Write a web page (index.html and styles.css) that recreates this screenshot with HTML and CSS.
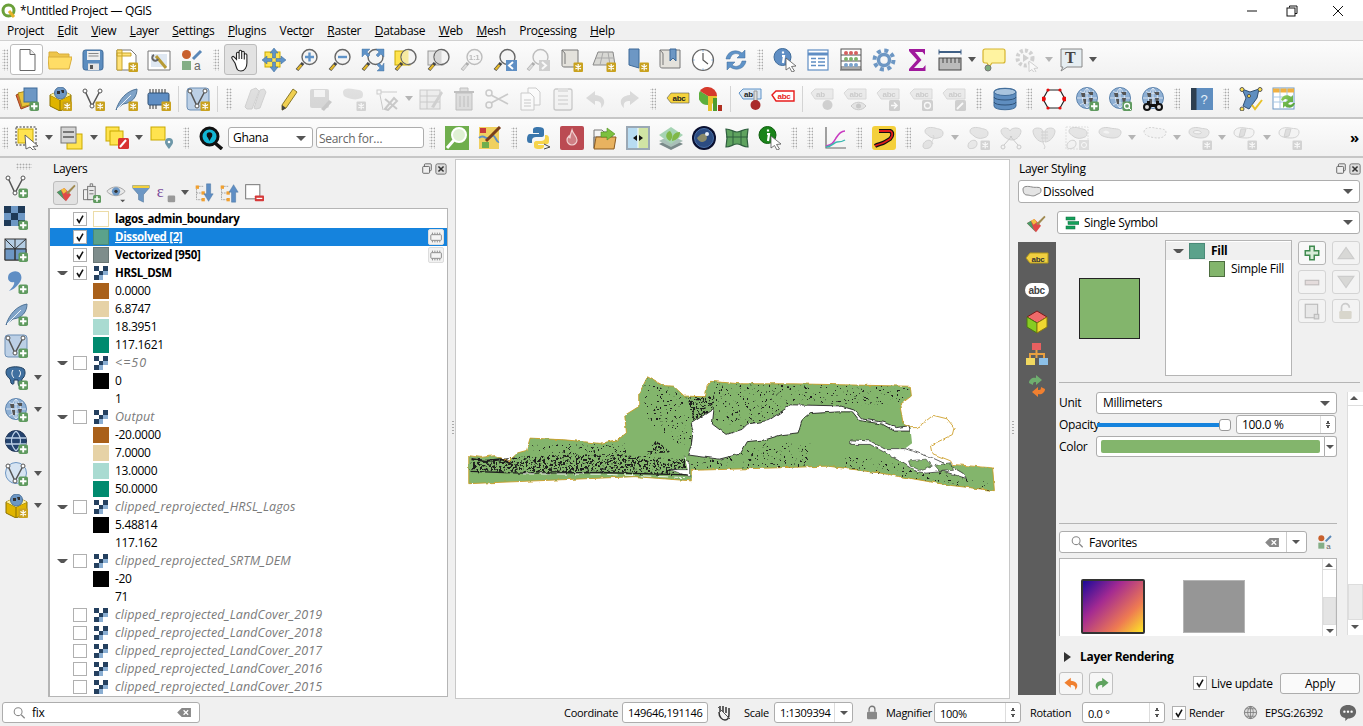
FILE: index.html
```html
<!DOCTYPE html>
<html lang="en">
<head>
<meta charset="utf-8">
<title>*Untitled Project — QGIS</title>
<link rel="stylesheet" href="styles.css">
</head>
<body>
<svg class="defs" xmlns="http://www.w3.org/2000/svg">
<defs>
<g id="bp"><rect x="14.5" y="14.5" width="9.5" height="9.5" rx="1.8" fill="#5f9a5f"/><path d="M19.2 16v6.5M16 19.2h6.5" stroke="#fff" stroke-width="1.9"/></g>
<g id="bs"><rect x="14.5" y="14.5" width="9.5" height="9.5" rx="1" fill="#c9a21f"/><path d="M19.2 16v6.5M16.4 17.5l5.6 3.4M22 17.5l-5.6 3.4" stroke="#fff" stroke-width="1.2"/></g>
<g id="mg"><path d="M8 15L2 22" stroke="#444" stroke-width="3.4"/><path d="M6.5 17L2.5 21.5" stroke="#e3b82c" stroke-width="2.2"/><circle cx="14.5" cy="9" r="7.5" fill="#f4f4f4" stroke="#666" stroke-width="1.4"/></g>
<g id="vv"><path d="M4 4L11 19L19 4" fill="none" stroke="#555" stroke-width="1.5"/><circle cx="4" cy="4" r="2" fill="#fff" stroke="#555"/><circle cx="11" cy="19" r="2" fill="#fff" stroke="#555"/><circle cx="19" cy="4" r="2" fill="#fff" stroke="#555"/></g>
<g id="fe"><path d="M2 23C5 13 12 4 23 2C23 10 18 16 9 17L5 20Z" fill="#7fa3c8" stroke="#4f7396"/><path d="M3 22L17 8" stroke="#e8f0f8"/></g>
<g id="gl"><circle cx="12" cy="11" r="10.5" fill="#8fb0d4" stroke="#5d84ae"/><path d="M2 11h20M12 1v20M5 4c4 3 10 3 14 0M5 18c4-3 10-3 14 0M12 1c-6 6-6 14 0 20M12 1c6 6 6 14 0 20" fill="none" stroke="#dfe8f2" stroke-width=".9"/><path d="M6 6h4v4H7zM13 5h5v3h-3zM8 12h3v5H9zM14 11h4l-1 5h-2z" fill="#555"/></g>
<g id="bx"><path d="M2 8L13 3L23 8V19L12 24L2 19Z" fill="#e0b400" stroke="#8a7000"/><path d="M2 8L12 13V24M12 13L23 8" fill="none" stroke="#8a7000"/><path d="M2 8L12 13L23 8L13 3Z" fill="#fff2a0"/><circle cx="12.5" cy="6" r="6" fill="#6d97c4" stroke="#4c7199"/><path d="M9 4h3v3H9zM13 3h3v3h-2z" fill="#333"/></g>
<g id="bl"><path d="M4 5c0-4 7-4 10-3s8 1 8 5-2 4-5 5-7 0-9-2S4 8 4 5z" fill="#c9c9c6" stroke="#999"/></g>
<linearGradient id="grad" x1="0" y1="0" x2="1" y2="1"><stop offset="0" stop-color="#8fd05e"/><stop offset="1" stop-color="#4f9d3a"/></linearGradient>
</defs>
<symbol id="qg" viewBox="0 0 16 16"><circle cx="7.5" cy="7.5" r="5.5" fill="none" stroke="#6aa03a" stroke-width="3"/><path d="M8 8l5 6" stroke="#e4b32a" stroke-width="3"/></symbol>
<symbol id="new" viewBox="0 0 24 24"><path d="M5 1.5h10l5 5v16H5z" fill="#fff" stroke="#666"/><path d="M15 1.5v5h5" fill="#eee" stroke="#666"/></symbol>
<symbol id="open" viewBox="0 0 24 24"><path d="M1 6V4h8l2 2h10v5H1z" fill="#eec54a" stroke="#d8ad3c"/><path d="M1 21L0 9h24l-3 12z" fill="#ffdd66" stroke="#d8ad3c"/></symbol>
<symbol id="save" viewBox="0 0 24 24"><rect x="2" y="2" width="20" height="20" rx="2.5" fill="#5c8dbf" stroke="#3f6b99"/><rect x="6" y="3" width="13" height="9" fill="#eee"/><path d="M7.5 5.5h10M7.5 8h10" stroke="#888"/><rect x="7" y="15.5" width="11" height="6.5" fill="#e4e4e4"/><rect x="9" y="17" width="3" height="4" fill="#555"/></symbol>
<symbol id="nlay" viewBox="0 0 24 24"><path d="M3 2h14l5 5v15H3z" fill="#fff" stroke="#777"/><path d="M3 2h5v20H3zM3 5h14v3H3z" fill="#ffe27a" stroke="#c9a52a"/><use href="#bs"/></symbol>
<symbol id="lman" viewBox="0 0 24 24"><path d="M1 3h22v19H1z" fill="#fff" stroke="#777"/><path d="M4 6h16v13H4z" fill="#dfe8f2"/><path d="M9 8l10 12" stroke="#b89b35" stroke-width="3"/><path d="M7 7a3 3 0 1 0 4 4" fill="none" stroke="#666" stroke-width="2"/></symbol>
<symbol id="stl" viewBox="0 0 24 24"><circle cx="6.5" cy="6.5" r="4.5" fill="#c8602d"/><path d="M13 11L21 3" stroke="#5a88b8" stroke-width="3"/><rect x="2" y="13" width="9" height="9" fill="#84ae86"/></symbol>
<symbol id="hand" viewBox="0 0 24 24"><path d="M6 15L3 10.5c-1-1.5 1-2.800 2-1.500L7.500 11.500V5.500a1.300 1.300 0 0 1 2.600 0V11V3.500a1.300 1.300 0 0 1 2.600 0V11V4.500a1.300 1.300 0 0 1 2.600 0V11.500V7a1.300 1.300 0 0 1 2.600 0V15c0 4-2 8-6 8S8 21 6 15z" fill="#fff" stroke="#222" stroke-width="1.1"/></symbol>
<symbol id="pans" viewBox="0 0 24 24"><rect x="3" y="4" width="15" height="15" fill="#ffe34f" stroke="#c9a900"/><path d="M12 0l4 5h-2.500v5h-3V5H8zM12 24l-4-5h2.500v-5h3v5H16zM0 12l5-4v2.500h5v3H5V16zM24 12l-5 4v-2.500h-5v-3h5V8z" fill="#5f93c8" stroke="#3f6b99" stroke-width=".5"/></symbol>
<symbol id="zin" viewBox="0 0 24 24"><use href="#mg"/><path d="M14.500 4.500v9M10 9h9" stroke="#5f93c8" stroke-width="2.4"/></symbol>
<symbol id="zout" viewBox="0 0 24 24"><use href="#mg"/><path d="M10 9h9" stroke="#5f93c8" stroke-width="2.4"/></symbol>
<symbol id="zful" viewBox="0 0 24 24"><use href="#mg"/><path d="M1 1h8l-3 3 3 3-2 2-3-3-3 3zM23 1v8l-3-3-3 3-2-2 3-3-3-3zM23 23h-7l3-3-3-3 2-2 3 3 2-3z" fill="#5f93c8" stroke="#3f6b99" stroke-width=".4"/></symbol>
<symbol id="zsel" viewBox="0 0 24 24"><rect x="1" y="3" width="15" height="14" fill="#ffe34f" stroke="#c9a900"/><use href="#mg"/><path d="M14.500 2a7 7 0 0 0 0 14z" fill="#f6e9a0"/></symbol>
<symbol id="zlay" viewBox="0 0 24 24"><rect x="1" y="3" width="15" height="14" fill="#e6e6e6" stroke="#999"/><use href="#mg"/><path d="M14.500 2a7 7 0 0 0 0 14z" fill="#d6d6d6"/></symbol>
<symbol id="z11" viewBox="0 0 24 24"><use href="#mg"/></symbol>
<symbol id="zprv" viewBox="0 0 24 24"><use href="#mg"/><rect x="13" y="12" width="11" height="11" fill="#5f8fc4"/><path d="M20 14l-4 3.500 4 3.500" fill="none" stroke="#fff" stroke-width="2"/></symbol>
<symbol id="znxt" viewBox="0 0 24 24"><use href="#mg"/><rect x="13" y="12" width="11" height="11" fill="#999"/><path d="M16 14l4 3.500-4 3.500" fill="none" stroke="#fff" stroke-width="2"/></symbol>
<symbol id="nmap" viewBox="0 0 24 24"><path d="M3 2h16v17H6c-3 0-3-1-3-3z" fill="#e4e2dc" stroke="#777"/><path d="M3 2c1 2 3 2 3 4v10" fill="none" stroke="#777"/><use href="#bs"/></symbol>
<symbol id="m3d" viewBox="0 0 24 24"><path d="M6 4h15l2 13H1z" fill="#d8d8d4" stroke="#888"/><path d="M11 4l-3 13M16 4l2 13M4 10h18" stroke="#aaa"/><use href="#bs"/></symbol>
<symbol id="bmk" viewBox="0 0 24 24"><path d="M4 1h10v19l-10-3z" fill="#6d97c4" stroke="#3f6b99"/><use href="#bs"/></symbol>
<symbol id="bm2" viewBox="0 0 24 24"><path d="M2 2h20v18H5c-3 0-3-1-3-3z" fill="#e4e2dc" stroke="#777"/><path d="M2 2c1 2 3 2 3 4v11" fill="none" stroke="#777"/><path d="M12 1h6v12l-3-3-3 3z" fill="#6d97c4" stroke="#3f6b99"/></symbol>
<symbol id="clk" viewBox="0 0 24 24"><circle cx="12" cy="12" r="10.5" fill="#fff" stroke="#666" stroke-width="1.2"/><path d="M12 5v7l5 4" fill="none" stroke="#555" stroke-width="1.2"/><path d="M12 2v1.500M12 20.500V22M2 12h1.500M20.500 12H22" stroke="#6d97c4"/></symbol>
<symbol id="rfr" viewBox="0 0 24 24"><path d="M2 11C3 4 11 0 18 5l3-3v8h-8l3-3C12 4 7 6 6 11z" fill="#5f93c8" stroke="#3f6b99" stroke-width=".5"/><path d="M22 13c-1 7-9 11-16 6l-3 3v-8h8l-3 3c4 3 9 1 10-4z" fill="#5f93c8" stroke="#3f6b99" stroke-width=".5"/></symbol>
<symbol id="idn" viewBox="0 0 24 24"><circle cx="9.5" cy="9" r="8.5" fill="#5f8ec4" stroke="#3f6b99"/><path d="M10 3.500v2M9 8h2l-1 7" stroke="#fff" stroke-width="2.2" fill="none"/><path d="M13 10l10 8-4.500.5 3 4.500-2.500 1-2.500-4.500L13 22z" fill="#fff" stroke="#555" stroke-width=".8"/></symbol>
<symbol id="tbl" viewBox="0 0 24 24"><rect x="2" y="2" width="20" height="20" fill="#fff" stroke="#5f8ec4" stroke-width="1.2"/><path d="M2 6h20" stroke="#5f8ec4" stroke-width="3"/><path d="M5 10.500h5M5 14h5M5 17.500h5M12 10.500h7M12 14h7M12 17.500h7" stroke="#5f8ec4" stroke-width="1.3"/></symbol>
<symbol id="abc2" viewBox="0 0 24 24"><rect x="2" y="1" width="20" height="20" fill="#fff" stroke="#555"/><path d="M1 22h22M2 7h20M2 13h20M2 19h20" stroke="#555"/><circle cx="7" cy="5" r="2" fill="#d46060"/><circle cx="12" cy="5" r="2" fill="#d46060"/><circle cx="17" cy="5" r="2" fill="#d46060"/><circle cx="7" cy="11" r="2" fill="#7cb36c"/><circle cx="12" cy="11" r="2" fill="#7cb36c"/><circle cx="17" cy="11" r="2" fill="#7cb36c"/><circle cx="7" cy="17" r="2" fill="#7ba2cc"/><circle cx="12" cy="17" r="2" fill="#7ba2cc"/><circle cx="17" cy="17" r="2" fill="#7ba2cc"/></symbol>
<symbol id="gear" viewBox="0 0 24 24"><circle cx="12" cy="12" r="9.500" fill="none" stroke="#6d97c4" stroke-width="4" stroke-dasharray="4 3.460"/><circle cx="12" cy="12" r="5.500" fill="none" stroke="#6d97c4" stroke-width="3.5"/></symbol>
<symbol id="sig" viewBox="0 0 24 24"><path d="M4 1h16v6l-2.500-3H10l6.500 8L9 20h9l2.500-3v6H4v-2l8-9-8-9z" fill="#a0189c"/></symbol>
<symbol id="rul" viewBox="0 0 24 24"><path d="M1 4h22" stroke="#3f5f85" stroke-width="2"/><path d="M1 1.500v5M23 1.500v5" stroke="#3f5f85"/><rect x="1" y="10" width="22" height="12" fill="#bbb" stroke="#444"/><path d="M5 10v5M9 10v5M13 10v5M17 10v5M21 10v5" stroke="#444"/></symbol>
<symbol id="nte" viewBox="0 0 24 24"><path d="M3 1h18a2 2 0 0 1 2 2v10a2 2 0 0 1-2 2H10l-3 4-2-4H3a2 2 0 0 1-2-2V3a2 2 0 0 1 2-2z" fill="#fff3a0" stroke="#d6b52e" stroke-width="1.2"/><circle cx="6" cy="20" r="3" fill="#7cab7c" stroke="#777"/></symbol>
<symbol id="gpl" viewBox="0 0 24 24"><circle cx="10" cy="10" r="7.500" fill="none" stroke="#999" stroke-width="4" stroke-dasharray="3 2"/><path d="M8 6l6 4-6 4z" fill="#999"/><path d="M14 13l9 7-4 .5 2 3-2 1-2-3-3 2z" fill="#fff" stroke="#999"/></symbol>
<symbol id="tcl" viewBox="0 0 24 24"><path d="M2 1h21v18H8l-6 4 2-4H2z" fill="#e6eef2" stroke="#888"/></symbol>
<symbol id="adl" viewBox="0 0 24 24"><path d="M1 8l12-4 3 14-10 4z" fill="#d96b3a" stroke="#a0441c"/><path d="M3 6l13-3 2 14-11 3z" fill="#e9c23a" stroke="#a88a1a"/><rect x="9" y="1" width="13" height="14" fill="#6d97c4" stroke="#3f6b99"/><use href="#bp"/></symbol>
<symbol id="ngp" viewBox="0 0 24 24"><use href="#bx"/><use href="#bs"/></symbol>
<symbol id="vst" viewBox="0 0 24 24"><use href="#vv"/><use href="#bs"/></symbol>
<symbol id="fst" viewBox="0 0 24 24"><use href="#fe"/><use href="#bs"/></symbol>
<symbol id="chp" viewBox="0 0 24 24"><path d="M3 2v4M6 2v4M9 2v4M12 2v4M15 2v4M18 2v4M3 18v4M6 18v4M9 18v4" stroke="#333"/><rect x="1" y="6" width="21" height="12" rx="1.5" fill="#5f8ec4" stroke="#2f4f73"/><use href="#bs"/></symbol>
<symbol id="vbs" viewBox="0 0 24 24"><rect x="1" y="1" width="22" height="22" rx="3" fill="#bcd0e6" stroke="#6d8fb5"/><use href="#vv"/><use href="#bs"/></symbol>
<symbol id="pns" viewBox="0 0 24 24"><path d="M4 22L2 20 8 3l5-2 3 3-7 18zM13 22l-2-1L17 3l4-1 2 3-6 16z" fill="#bbb" stroke="#999"/></symbol>
<symbol id="pen" viewBox="0 0 24 24"><path d="M6 18L17 2l4 3L10 21l-4 2z" fill="#f0cf50" stroke="#8a7a2a"/><path d="M6 18l4 3-4 2.500z" fill="#444"/></symbol>
<symbol id="sed" viewBox="0 0 24 24"><rect x="1" y="2" width="19" height="19" rx="2" fill="#aaa"/><rect x="5" y="3" width="11" height="7" fill="#eee"/><path d="M12 22l8-9 3 2-8 9z" fill="#888"/></symbol>
<symbol id="apl" viewBox="0 0 24 24"><path d="M1 5c0-4 7-4 10-3s10 0 10 5-2 4-5 5-7 0-10-1S1 9 1 5z" fill="#bbb"/><use href="#bs"/></symbol>
<symbol id="vtx" viewBox="0 0 24 24"><rect x="2" y="3" width="4" height="4" fill="none" stroke="#888"/><path d="M6 5h16M5 8l3 15" stroke="#888"/><path d="M10 22l9-11 3 3-9 9zM10 12l12 10" stroke="#888" stroke-width="2" fill="none"/></symbol>
<symbol id="ted" viewBox="0 0 24 24"><rect x="1" y="3" width="20" height="19" fill="#ddd" stroke="#888"/><path d="M1 9h20M1 15h20M8 3v19" stroke="#888"/><path d="M12 20L22 4l2 2-9 15z" fill="#999"/></symbol>
<symbol id="trs" viewBox="0 0 24 24"><path d="M2 5h20" stroke="#866" stroke-width="2"/><path d="M8 4V1h8v3M4 6h16v17H4z" fill="#c9b5b5" stroke="#866"/><path d="M8 9v11M12 9v11M16 9v11" stroke="#866"/></symbol>
<symbol id="scs" viewBox="0 0 24 24"><circle cx="4" cy="6" r="3" fill="none" stroke="#888" stroke-width="1.5"/><circle cx="4" cy="18" r="3" fill="none" stroke="#888" stroke-width="1.5"/><path d="M6 8l17 9M6 16l17-9" stroke="#888" stroke-width="1.7"/></symbol>
<symbol id="cpy" viewBox="0 0 24 24"><path d="M10 1h8l4 4v13H10z" fill="#fff" stroke="#888"/><path d="M3 6h9l4 4v13H3z" fill="#fff" stroke="#888"/><path d="M6 13h7M6 16h7M6 19h7" stroke="#888"/></symbol>
<symbol id="pst" viewBox="0 0 24 24"><rect x="3" y="2" width="18" height="21" rx="2" fill="#eee" stroke="#888" stroke-width="1.3"/><rect x="7" y="1" width="10" height="4" fill="#bbb"/><path d="M7 9h10M7 13h10M7 17h10" stroke="#888"/></symbol>
<symbol id="und" viewBox="0 0 24 24"><path d="M11 4L2 11l9 7v-4c5 0 7 2 6 7 5-4 5-12-6-13z" fill="#f08030"/></symbol>
<symbol id="red" viewBox="0 0 24 24"><path d="M13 4l9 7-9 7v-4c-5 0-7 2-6 7-5-4-5-12 6-13z" fill="#5fa35f"/></symbol>
<symbol id="yl" viewBox="0 0 24 24"><path d="M1 11l4-5h18v10H5z" fill="#f5d33c" stroke="#555" stroke-width=".6"/></symbol>
<symbol id="pie" viewBox="0 0 24 24"><path d="M9 9V0a9 9 0 0 1 9 9z" fill="#d63a2c"/><path d="M9 9h9a9 9 0 0 1-9 9z" fill="#e8c32c"/><path d="M9 9v9A9 9 0 0 1 1 4z" fill="#5cae3c"/><path d="M9 9L1 4a9 9 0 0 1 8-4z" fill="#d63a2c"/><rect x="9" y="17" width="4" height="7" fill="#e8c32c"/><rect x="14" y="11" width="4" height="13" fill="#4e9c2e"/><rect x="19" y="18" width="4" height="6" fill="#b03020"/></symbol>
<symbol id="apn" viewBox="0 0 24 24"><path d="M1 6l4-4h18v10H5z" fill="#d9e6f3" stroke="#5f93c8"/><path d="M16 4h3v10h-3z" fill="#ddd" stroke="#999"/><circle cx="17.5" cy="18" r="5" fill="#aa2a2a"/></symbol>
<symbol id="ard" viewBox="0 0 24 24"><path d="M1 8l4-4h18v10H5z" fill="#fff" stroke="#e81c1c" stroke-width="1.4"/></symbol>
<symbol id="a1" viewBox="0 0 24 24"><path d="M1 6l4-4h18v10H5z" fill="#d6d6d6" stroke="#aaa"/><circle cx="17.5" cy="18" r="5" fill="#999"/></symbol>
<symbol id="a2" viewBox="0 0 24 24"><path d="M1 6l4-4h18v10H5z" fill="#d6d6d6" stroke="#aaa"/><path d="M8 19c4-5 11-5 15 0-4 5-11 5-15 0z" fill="#ccc" stroke="#888"/><circle cx="15.5" cy="19" r="2.5" fill="#888"/></symbol>
<symbol id="a3" viewBox="0 0 24 24"><path d="M1 6l4-4h18v10H5z" fill="#d6d6d6" stroke="#aaa"/><rect x="13" y="13" width="11" height="11" rx="1.5" fill="#999"/><path d="M15 18.500h5M18 15.500l3 3-3 3" stroke="#fff" stroke-width="1.5" fill="none"/></symbol>
<symbol id="a4" viewBox="0 0 24 24"><path d="M1 6l4-4h18v10H5z" fill="#d6d6d6" stroke="#aaa"/><rect x="13" y="13" width="11" height="11" rx="1.5" fill="#999"/><circle cx="18.5" cy="18.5" r="3" fill="none" stroke="#fff" stroke-width="1.3"/></symbol>
<symbol id="a5" viewBox="0 0 24 24"><path d="M1 6l4-4h18v10H5z" fill="#d6d6d6" stroke="#aaa"/><rect x="13" y="13" width="11" height="11" rx="1.5" fill="#999"/><path d="M15 22l6-6" stroke="#fff" stroke-width="1.8"/></symbol>
<symbol id="db" viewBox="0 0 24 24"><path d="M1 5c0-5 22-5 22 0v14c0 5-22 5-22 0z" fill="#5f8ec0" stroke="#3f6b99"/><ellipse cx="12" cy="5" rx="11" ry="3.5" fill="#a9c4de" stroke="#3f6b99"/><path d="M1 10c0 4 22 4 22 0M1 15c0 4 22 4 22 0" fill="none" stroke="#2f5278"/></symbol>
<symbol id="hex" viewBox="0 0 24 24"><path d="M6 3h12l5 9-5 9H6L1 12z" fill="#fff" stroke="#222" stroke-width="1.2"/><g fill="#e80c0c"><circle cx="6" cy="3" r="1.6"/><circle cx="18" cy="3" r="1.6"/><circle cx="22.5" cy="12" r="2.4"/><circle cx="1.500" cy="12" r="2.4"/><circle cx="6" cy="21" r="1.6"/><circle cx="18" cy="21" r="1.6"/></g></symbol>
<symbol id="gpl2" viewBox="0 0 24 24"><use href="#gl"/><use href="#bp"/></symbol>
<symbol id="gms" viewBox="0 0 24 24"><use href="#gl"/><rect x="14.5" y="14.5" width="9.5" height="9.5" rx="1.8" fill="#5f9a5f"/><circle cx="19" cy="19" r="2.5" fill="none" stroke="#fff" stroke-width="1.3"/><path d="M21 21l2 2" stroke="#fff"/></symbol>
<symbol id="gbn" viewBox="0 0 24 24"><use href="#gl"/><circle cx="6" cy="20" r="4" fill="#111"/><circle cx="18" cy="20" r="4" fill="#111"/><path d="M6 14h3v3h6v-3h3v6H6z" fill="#111"/><circle cx="6" cy="20" r="2" fill="#ddd"/><circle cx="18" cy="20" r="2" fill="#ddd"/></symbol>
<symbol id="hlp" viewBox="0 0 24 24"><rect x="1" y="1" width="22" height="22" fill="#5f8ec0"/><rect x="1" y="1" width="5.5" height="22" fill="#2e3f50"/></symbol>
<symbol id="sck" viewBox="0 0 24 24"><path d="M3 2l8 3 9-3-2 9-8 11-6-3 3-8z" fill="#5f8ec0" stroke="#2f4f73"/><circle cx="3" cy="2.500" r="2" fill="#ffe34f" stroke="#555"/><circle cx="21" cy="2.500" r="2" fill="#ffe34f" stroke="#555"/><circle cx="10" cy="9" r="1.6" fill="#ffe34f" stroke="#555"/><circle cx="3" cy="22" r="2" fill="#ffe34f" stroke="#555"/><path d="M13 18l3 4 7-9" fill="none" stroke="#e8c22a" stroke-width="2"/></symbol>
<symbol id="trf" viewBox="0 0 24 24"><rect x="1" y="1" width="21" height="21" fill="#fff" stroke="#6d97c4"/><path d="M1 3.500h21" stroke="#f0b040" stroke-width="4"/><path d="M1 10h21M1 15h21M8 1v21M15 1v21" stroke="#a9c8e4"/><path d="M9 13c1-5 7-6 10-3l2-2v7h-7l2-2c-2-2-4-1-5 1zM23 16c-1 5-7 6-10 3l-2 2v-6h7l-2 2c2 1 4 1 5-1z" fill="url(#grad)"/></symbol>
<symbol id="sel" viewBox="0 0 24 24"><rect x="1" y="1" width="20" height="18" fill="none" stroke="#333" stroke-dasharray="2 1.500"/><rect x="3" y="3" width="15" height="14" fill="#ffe34f" stroke="#c9a900"/><path d="M10 9l13 11-5 .5 3 3.500-3 0-3-3-4 2z" fill="#fff" stroke="#555" stroke-width=".9"/></symbol>
<symbol id="sfm" viewBox="0 0 24 24"><rect x="7" y="8" width="15" height="15" fill="#ffe34f" stroke="#c9a900"/><rect x="1" y="1" width="15" height="16" fill="#d6d6d6" stroke="#777"/><path d="M3 6h11M3 11h11" stroke="#777" stroke-width="2"/></symbol>
<symbol id="dsl" viewBox="0 0 24 24"><rect x="1" y="1" width="13" height="14" fill="#ffe34f" stroke="#c9a900"/><rect x="5" y="5" width="13" height="14" fill="#ffe34f" stroke="#c9a900"/><rect x="13" y="12" width="11" height="11" rx="1.5" fill="#d83232"/><path d="M15 21l6-7" stroke="#fff" stroke-width="2"/></symbol>
<symbol id="sll" viewBox="0 0 24 24"><rect x="1" y="1" width="14" height="13" fill="#ffe34f" stroke="#c9a900"/><path d="M19 23c-3-4-4-5-4-7a4 4 0 0 1 8 0c0 2-1 3-4 7z" fill="#6d97a8"/><circle cx="19" cy="16" r="1.3" fill="#fff"/></symbol>
<symbol id="lsr" viewBox="0 0 24 24"><path d="M16 17l7 6" stroke="#111" stroke-width="3.5"/><circle cx="10.5" cy="10.5" r="8.5" fill="#12b6d4" stroke="#111" stroke-width="3"/><circle cx="10.5" cy="9" r="2.8" fill="#111"/><path d="M10.500 15l-2.500-5h5z" fill="#111"/></symbol>
<symbol id="gsr" viewBox="0 0 24 24"><rect x="0" y="0" width="24" height="24" fill="#6fae4d"/><circle cx="14" cy="9" r="7" fill="#dff0d4" stroke="#fff" stroke-width="2"/><path d="M9 14l-7 8" stroke="#fff" stroke-width="3"/></symbol>
<symbol id="mpn" viewBox="0 0 24 24"><rect x="1" y="1" width="20" height="22" fill="#f0d060"/><path d="M1 12c5-5 8 4 12-1s5 6 8 5" fill="none" stroke="#5f8ec4" stroke-width="2"/><rect x="2" y="2" width="6" height="5" fill="#c83a3a"/><rect x="4" y="16" width="7" height="6" fill="#6fae4d"/><path d="M8 15L22 1" stroke="#7a3f1c" stroke-width="3"/></symbol>
<symbol id="py" viewBox="0 0 24 24"><path d="M11 1c-4 0-5 1-5 3v3h6v1H3c-2 0-3 2-3 5s1 4 3 4h2v-3c0-2 2-3 4-3h6c1 0 2-1 2-2V4c0-2-2-3-6-3z" fill="#3a76ac"/><path d="M12 23c4 0 5-1 5-3v-1h-6v-1h9c2 0 2-2 2-5s-1-4-3-4h-1v3c0 2-2 3-4 3H9c-1 0-2 1-2 2v3c0 2 1 3 5 3z" fill="#f6d44c"/><path d="M17 18l6 3-6 2" fill="none" stroke="#444"/></symbol>
<symbol id="fir" viewBox="0 0 24 24"><rect width="24" height="24" rx="2" fill="#bb4a52"/><path d="M12 4c1 4 5 6 5 10a5 5 0 0 1-10 0c0-2 1-3 2-4 0 2 1 2 1 2 0-3 1-5 2-8z" fill="#cf7f84" stroke="#f0d0d0" stroke-width="1.2"/></symbol>
<symbol id="fdr" viewBox="0 0 24 24"><path d="M1 22V4h8l2 2h8v5H1z" fill="#f4f4f4" stroke="#777"/><path d="M1 23l2-12h20l-2 12z" fill="#e8b260" stroke="#8a5a20"/><path d="M8 6h6V2l8 6-8 6v-3H8z" fill="#7cc040" stroke="#4f9020" stroke-width=".6"/></symbol>
<symbol id="swp" viewBox="0 0 24 24"><rect width="24" height="24" fill="#9aa8b5"/><rect x="2" y="2" width="10" height="20" fill="#b8dcf2"/><rect x="12" y="2" width="10" height="20" fill="#d0e4a4"/><path d="M12 2v20" stroke="#fff"/><path d="M7 12l4-3v6zM17 12l-4-3v6z" fill="#111"/></symbol>
<symbol id="lea" viewBox="0 0 24 24"><path d="M12 12l12 6-12 6-12-6z" fill="#7a8a8a"/><path d="M12 9l12 6-12 6-12-6z" fill="#a9c0b8"/><path d="M12 1l12 8-12 9L0 9z" fill="#a6d4b4"/><path d="M11 15c-6-3-4-9 0-10 3 3 3 7 0 10zM13 15c0-6 3-9 8-9 0 5-3 8-8 9z" fill="#80b848"/></symbol>
<symbol id="ear" viewBox="0 0 24 24"><circle cx="12" cy="12" r="12" fill="#0a1030"/><circle cx="12" cy="12" r="9.5" fill="#2c4c82" stroke="#4a70a8"/><path d="M5 12c3-4 6-5 8-4s3 5 0 7-6 1-8-3z" fill="#8a8a6a"/><circle cx="15" cy="8" r="2" fill="#e8eef8"/></symbol>
<symbol id="btf" viewBox="0 0 24 24"><path d="M1 3c5 0 7 3 11 3s6-3 11-3l-1 9 1 9c-5 0-7-3-11-3s-6 3-11 3l1-9z" fill="#5fa35f" stroke="#2f5f3f" stroke-width="1.2"/><path d="M1 11h22M8 5v14M16 5v14" stroke="#2f5f3f"/></symbol>
<symbol id="gid" viewBox="0 0 24 24"><circle cx="9.5" cy="9" r="8.5" fill="#1a841a" stroke="#0f5f0f"/><path d="M10 3.500v2M9 8h2l-1 7" stroke="#fff" stroke-width="2.2" fill="none"/><path d="M13 10l10 8-4.500.5 3 4.500-2.500 1-2.500-4.500L13 22z" fill="#fff" stroke="#555" stroke-width=".8"/></symbol>
<symbol id="cht" viewBox="0 0 24 24"><path d="M3 1v21h20" fill="none" stroke="#666" stroke-width="1.2"/><path d="M3 20c6-1 7-3 10-8s7-7 9-7" fill="none" stroke="#c83ac0" stroke-width="1.5"/><path d="M3 21c6 0 8-5 11-5s5 0 8-2" fill="none" stroke="#3ab8b0" stroke-width="1.5"/></symbol>
<symbol id="sgn" viewBox="0 0 24 24"><rect width="24" height="24" rx="3" fill="#f4d03c"/><path d="M7 5h11c3 1 3 5 0 8l-5 3c-3 2-7 2-10 4" fill="none" stroke="#111" stroke-width="4"/><path d="M7 5h11c3 1 3 5 0 8l-5 3c-3 2-7 2-10 4" fill="none" stroke="#e01c1c" stroke-width="1.8"/></symbol>
<symbol id="sh1" viewBox="0 0 24 24"><use href="#bl"/><path d="M2 20c0-5 6-7 8-5s1 6-2 7-6 1-6-2z" fill="#c9c9c6" stroke="#999"/><path d="M12 9c3 4-3 5 0 9" fill="none" stroke="#b99"/></symbol>
<symbol id="sh2" viewBox="0 0 24 24"><use href="#bl"/><path d="M2 20c0-5 6-7 8-5s1 6-2 7-6 1-6-2z" fill="#d6d6d3" stroke="#999"/><use href="#bs"/></symbol>
<symbol id="sh3" viewBox="0 0 24 24"><path d="M2 5c0-4 8-4 9 0 1-4 11-4 11 0s-4 9-9 9-11-5-11-9z" fill="#c9c9c6" stroke="#999"/><path d="M5 19l8-9M19 19l-8-9" stroke="#888"/><circle cx="4" cy="21" r="2" fill="none" stroke="#888"/><circle cx="20" cy="21" r="2" fill="none" stroke="#888"/></symbol>
<symbol id="sh4" viewBox="0 0 24 24"><path d="M1 5c0-4 9-4 10 0v11c-5 0-10-6-10-11zM23 5c0-4-9-4-10 0v11c5 0 10-6 10-11z" fill="#c9c9c6" stroke="#999"/><path d="M9 6h7M9 9h7M9 12h7M12 15c-3 3 3 4 0 8" fill="none" stroke="#999"/></symbol>
<symbol id="sh5" viewBox="0 0 24 24"><rect x="1" y="1" width="22" height="22" fill="none" stroke="#bbb" stroke-dasharray="2 1"/><use href="#bl"/><path d="M2 20c0-5 6-7 8-5s1 6-2 7-6 1-6-2z" fill="#eee" stroke="#999"/><rect x="14" y="14" width="10" height="10" fill="#bbb"/><circle cx="19" cy="19" r="2.5" fill="none" stroke="#fff"/></symbol>
<symbol id="sh6" viewBox="0 0 24 24"><path d="M1 6c0-5 8-5 11-4s11 0 11 4-3 6-8 6S1 10 1 6z" fill="#c9c9c6" stroke="#999"/><path d="M5 6c2-2 4-2 6 0s-4 2-6 0z" fill="#eee"/></symbol>
<symbol id="sh7" viewBox="0 0 24 24"><path d="M1 6c0-5 8-5 11-4s11 0 11 4-3 6-8 6S1 10 1 6z" fill="#eee" stroke="#999" stroke-dasharray="2 1.500"/></symbol>
<symbol id="sh8" viewBox="0 0 24 24"><path d="M1 6c0-5 8-5 11-4s9 0 9 4-3 6-8 6S1 10 1 6z" fill="#ccc" stroke="#999"/><path d="M5 6c2-2 6-2 8 0s-6 3-8 0z" fill="#eee" stroke="#999"/><use href="#bs"/></symbol>
<symbol id="sh9" viewBox="0 0 24 24"><path d="M1 7c0-5 6-6 11-5s9 0 9 4-3 6-8 6S1 11 1 7z" fill="#eee" stroke="#999"/><path d="M8 3l5 0-2 7-5 1z" fill="#bbb" stroke="#999"/><use href="#bs"/></symbol>
<symbol id="v1" viewBox="0 0 24 24"><use href="#vv"/><use href="#bp"/></symbol>
<symbol id="ras" viewBox="0 0 24 24"><rect width="21" height="20" fill="#b4cde4"/><path d="M7 0h7v7H7zM0 7h7v7H0zM14 7h7v7h-7zM7 14h7v6H7z" fill="#6d97c4"/><path d="M0 0h7v7H0zM14 0h7v7h-7zM7 7h7v7H7zM0 14h7v6H0zM14 14h7v6h-7z" fill="#1f3a57"/><use href="#bp"/></symbol>
<symbol id="msh" viewBox="0 0 24 24"><rect x="1" y="1" width="21" height="21" fill="#b4cde4" stroke="#333"/><path d="M1 11h21M11 1v21M1 1l10 10M11 11L22 1" stroke="#333"/><path d="M11 11h11v11H11zM1 11h10v11H1z" fill="#6d97c4" stroke="#333"/><use href="#bp"/></symbol>
<symbol id="cma" viewBox="0 0 24 24"><path d="M8 2c7-3 12 4 8 10s-8 8-11 9c4-4 6-7 5-9-3 1-6-1-6-4s1-5 4-6z" fill="#5f8ec4"/><use href="#bp"/></symbol>
<symbol id="f1" viewBox="0 0 24 24"><use href="#fe"/><use href="#bp"/></symbol>
<symbol id="vb" viewBox="0 0 24 24"><rect x="1" y="1" width="22" height="22" rx="3" fill="#bcd0e6" stroke="#6d8fb5"/><use href="#vv"/><use href="#bp"/></symbol>
<symbol id="pg" viewBox="0 0 24 24"><path d="M3 3c4-3 13-3 17 0 2 3 1 8-2 10-1 3 0 6-2 7s-2-4-2-6h-4c0 3 0 5-2 4s-1-4-2-5C2 10 1 6 3 3z" fill="#3f6f9f" stroke="#1f3f5f"/><path d="M9 4c-2 3-1 6 1 8M15 4c2 2 2 4 0 7" fill="none" stroke="#fff"/><use href="#bp"/></symbol>
<symbol id="gw" viewBox="0 0 24 24"><circle cx="12" cy="11" r="10.5" fill="#24436f" stroke="#1a2f50"/><path d="M2 8h20M2 14h20" stroke="#bcd0e6" stroke-width="1.5"/><path d="M12 1c-6 6-6 14 0 20M12 1c6 6 6 14 0 20" fill="none" stroke="#bcd0e6" stroke-width="1.2"/><use href="#bp"/></symbol>
<symbol id="gv" viewBox="0 0 24 24"><circle cx="12" cy="11" r="10.5" fill="#d6e4f2" stroke="#6d97c4"/><use href="#vv"/><use href="#bp"/></symbol>
<symbol id="grp" viewBox="0 0 24 24"><path d="M8 8h-5v12h9" fill="none" stroke="#666"/><rect x="8" y="4" width="9" height="16" fill="#e8e8e8" stroke="#666"/><path d="M11 4V1h3v3M10 9h5M10 13h5" stroke="#666" fill="none"/><use href="#bp"/></symbol>
<symbol id="eye" viewBox="0 0 24 24"><path d="M1 10c6-7 16-7 22 0-6 7-16 7-22 0z" fill="#e8e8e8" stroke="#999"/><circle cx="12" cy="10" r="5" fill="#6d97c4"/><circle cx="12" cy="10" r="2" fill="#333"/><path d="M17 20h6l-3 3z" fill="#555"/></symbol>
<symbol id="flt" viewBox="0 0 24 24"><path d="M2 3h20v3l-7 8v9l-6-3v-6L2 6z" fill="#6d97c4" stroke="#4f7396" stroke-width=".6"/><path d="M2 3h20v3H2z" fill="#f4d03c"/></symbol>
<symbol id="eps" viewBox="0 0 24 24"><rect x="14" y="15" width="9" height="8" rx="1.5" fill="#999"/></symbol>
<symbol id="xpd" viewBox="0 0 24 24"><path d="M3 4h8M3 4v16h8M3 12h8" fill="none" stroke="#999" stroke-dasharray="2 1"/><rect x="2" y="3" width="4" height="4" fill="#f0a030"/><rect x="9" y="10" width="4" height="4" fill="#f0a030"/><rect x="9" y="18" width="4" height="4" fill="#f0a030"/><path d="M15 1h5v12h3l-5.500 9L12 13h3z" fill="#5f8ec4" stroke="#3f6b99" stroke-width=".5"/></symbol>
<symbol id="cps" viewBox="0 0 24 24"><path d="M3 4h8M3 4v16h8M3 12h8" fill="none" stroke="#999" stroke-dasharray="2 1"/><rect x="2" y="3" width="4" height="4" fill="#f0a030"/><rect x="9" y="10" width="4" height="4" fill="#f0a030"/><rect x="9" y="18" width="4" height="4" fill="#f0a030"/><path d="M15 23h5V11h3L17.500 2 12 11h3z" fill="#5f8ec4" stroke="#3f6b99" stroke-width=".5"/></symbol>
<symbol id="rmv" viewBox="0 0 24 24"><rect x="2" y="2" width="17" height="17" fill="#fff" stroke="#777" stroke-width="1.2"/><rect x="13" y="15" width="11" height="7" rx="1" fill="#d63a3a"/><path d="M15 18.500h7" stroke="#fff" stroke-width="1.5"/></symbol>
<symbol id="bru" viewBox="0 0 24 24"><path d="M1 11l9-5 8 8-6 8z" fill="#e04848"/><path d="M1 11l5-3 3 10 3 4z" fill="#4a9a6a"/><path d="M6 8l4-2 3 4-4 3z" fill="#f0c040"/><path d="M12 12L22 2l1.500 1.500-9 10z" fill="#a08a50"/></symbol>
<symbol id="chi" viewBox="0 0 16 12"><path d="M3 0v2M6 0v2M9 0v2M12 0v2M3 10v2M6 10v2M9 10v2M12 10v2" stroke="#777"/><rect x="1" y="2.500" width="13" height="7" rx="1" fill="#f4f4f4" stroke="#777"/></symbol>
<symbol id="chk" viewBox="0 0 14 14"><path d="M3.500 7l2.500 4 4.500-8" fill="none" stroke="#111" stroke-width="1.8"/></symbol>
<symbol id="rst" viewBox="0 0 14 14"><rect x="4" y="1" width="8" height="8" rx="1" fill="none" stroke="#555"/><rect x="2" y="4" width="8" height="8" rx="1" fill="#eee" stroke="#555"/></symbol>
<symbol id="cls" viewBox="0 0 14 14"><rect x="1" y="1" width="12" height="12" rx="2" fill="#ddd" stroke="#666"/><path d="M4 4l6 6M10 4l-6 6" stroke="#333" stroke-width="1.8"/></symbol>
<symbol id="sr" viewBox="0 0 16 16"><circle cx="7" cy="6.500" r="4.500" fill="none" stroke="#888" stroke-width="1.2"/><path d="M10.500 10l4 4" stroke="#888" stroke-width="1.4"/></symbol>
<symbol id="clr" viewBox="0 0 16 12"><path d="M0 6l5-5h10v10H5z" fill="#888"/><path d="M7 3.500l5 5M12 3.500l-5 5" stroke="#fff" stroke-width="1.3"/></symbol>
<symbol id="sng" viewBox="0 0 14 14"><rect x="1" y="1" width="9" height="3" fill="#14a05a" stroke="#0f6a3c" stroke-width=".5"/><rect x="3" y="5.500" width="11" height="3" fill="#14a05a" stroke="#0f6a3c" stroke-width=".5"/><rect x="1" y="10" width="9" height="3" fill="#14a05a" stroke="#0f6a3c" stroke-width=".5"/></symbol>
<symbol id="plg" viewBox="0 0 20 14"><path d="M1 4c0-3 5-3 9-2s9-1 9 3-2 3-5 5-6 0-9 0-4-3-4-6z" fill="#e4e4e4" stroke="#888"/></symbol>
<symbol id="ya" viewBox="0 0 24 24"><path d="M1 12l4-5h18v10H5z" fill="#f0cf40" stroke="#b39a1c"/></symbol>
<symbol id="wa" viewBox="0 0 24 24"><rect x="0" y="5" width="24" height="14" rx="7" fill="#fff"/></symbol>
<symbol id="cub" viewBox="0 0 24 24"><path d="M12 1l10 6-10 6L2 7z" fill="#ef6a6a" stroke="#7a1a1a"/><path d="M2 7l10 6v10L2 17z" fill="#88cc22" stroke="#4a7a10"/><path d="M22 7L12 13v10l10-6z" fill="#f0d830" stroke="#8a7a10"/></symbol>
<symbol id="hie" viewBox="0 0 24 24"><rect x="7" y="1" width="9" height="7" fill="#e86060"/><path d="M11.500 8v4M5 16v-4h14v4M11.500 12v4" fill="none" stroke="#e8a040" stroke-width="2"/><rect x="1" y="16" width="9" height="7" fill="#f0d860"/><rect x="14" y="16" width="9" height="7" fill="#8cc0e8"/></symbol>
<symbol id="hst" viewBox="0 0 24 24"><path d="M4 9c0-4 4-6 7-5V1l6 5-6 5V8c-2 0-3 0-3 3z" fill="#6fae6f"/><path d="M20 15c0 4-4 6-7 5v3l-6-5 6-5v3c2 0 3 0 3-3z" fill="#f08030"/></symbol>
<symbol id="lck" viewBox="0 0 14 18"><path d="M3.500 8V5a3.500 3.500 0 0 1 7 0v3" fill="none" stroke="#777" stroke-width="1.6"/><rect x="1" y="8" width="12" height="9" rx="1.5" fill="#888"/></symbol>
<symbol id="wnd" viewBox="0 0 16 16"><path d="M4 1v6M7 1v6M10 2v6M13 3v6M3 7c0 5 3 8 6 8s4-3 4-6" fill="none" stroke="#333" stroke-width="1.5"/><path d="M2 2l12 12" stroke="#555"/></symbol>
<symbol id="crs" viewBox="0 0 16 16"><circle cx="8" cy="8" r="6.500" fill="#ddd" stroke="#777"/><path d="M1.500 8h13M8 1.500v13M3 4h10M3 12h10M8 1.500c-4 4-4 9 0 13M8 1.500c4 4 4 9 0 13" fill="none" stroke="#777" stroke-width=".8"/></symbol>
<symbol id="msg" viewBox="0 0 20 20"><path d="M10 1c5 0 9 3 9 7.500S15 16 10 16l-3 3v-3.500C3 15 1 12 1 8.500 1 4 5 1 10 1z" fill="#666"/><circle cx="6" cy="8.500" r="1.3" fill="#fff"/><circle cx="10" cy="8.500" r="1.3" fill="#fff"/><circle cx="14" cy="8.500" r="1.3" fill="#fff"/></symbol>
<symbol id="ras2" viewBox="0 0 15 15"><rect width="14" height="14" fill="#a9c2dc"/><path d="M5 0h4v5H5zM0 5h5v4H0zM9 9h5v5H9z" fill="#fff"/><path d="M0 0h5v5H0zM9 0h5v5H9zM5 5h4v4H5zM0 9h5v5H0z" fill="#24405f"/><path d="M5 9h4v5H5zM9 5h5v4H9z" fill="#8aaed2"/></symbol>
<filter id="dense" x="0" y="0" width="1" height="1" color-interpolation-filters="sRGB"><feTurbulence type="fractalNoise" baseFrequency=".16" numOctaves="3" seed="4"/><feColorMatrix values="0 0 0 0 .12 0 0 0 0 .12 0 0 0 0 .12 14 0 0 0 -7.300"/><feComposite operator="in" in2="SourceGraphic"/></filter>
<filter id="thin" x="0" y="0" width="1" height="1" color-interpolation-filters="sRGB"><feTurbulence type="fractalNoise" baseFrequency=".16" numOctaves="3" seed="9"/><feColorMatrix values="0 0 0 0 .12 0 0 0 0 .12 0 0 0 0 .12 18 0 0 0 -12"/><feComposite operator="in" in2="SourceGraphic"/></filter>
<filter id="rough" x="-3%" y="-10%" width="106%" height="120%" color-interpolation-filters="sRGB"><feTurbulence type="fractalNoise" baseFrequency=".05" numOctaves="3" seed="2" result="n"/><feDisplacementMap in="SourceGraphic" in2="n" scale="9" xChannelSelector="R" yChannelSelector="G"/></filter>
</svg>

<header class="title">
  <svg class="logo"><use href="#qg"/></svg>
  <span class="title-text">*Untitled Project — QGIS</span>
  <div class="win">
    <svg class="wb wmin" viewBox="0 0 12 12"><path d="M1 6h10" stroke="#111"/></svg>
    <svg class="wb" viewBox="0 0 12 12"><path d="M3.500 2.500V1h7.500v7.500H9" fill="none" stroke="#111"/><rect x="1" y="3" width="8" height="8" fill="none" stroke="#111"/></svg>
    <svg class="wb" viewBox="0 0 12 12"><path d="M1 1l10 10M11 1L1 11" stroke="#111"/></svg>
  </div>
</header>

<nav class="menu">
  <span>Pro<u>j</u>ect</span><span><u>E</u>dit</span><span><u>V</u>iew</span><span><u>L</u>ayer</span><span><u>S</u>ettings</span><span><u>P</u>lugins</span><span>Vect<u>o</u>r</span><span><u>R</u>aster</span><span><u>D</u>atabase</span><span><u>W</u>eb</span><span><u>M</u>esh</span><span>Pro<u>c</u>essing</span><span><u>H</u>elp</span>
</nav>

<div class="tb">
  <i class="h h0"></i>
  <span class="b pressed white"><svg class="i"><use href="#new"/></svg></span>
  <span class="b"><svg class="i"><use href="#open"/></svg></span>
  <span class="b"><svg class="i"><use href="#save"/></svg></span>
  <span class="b"><svg class="i"><use href="#nlay"/></svg></span>
  <span class="b"><svg class="i"><use href="#lman"/></svg></span>
  <span class="b"><svg class="i" viewBox="0 0 24 24"><use href="#stl"/><text x="14" y="22" font-size="12" font-family="Liberation Sans" fill="#666">a</text></svg></span>
  <i class="h"></i>
  <span class="b pressed"><svg class="i"><use href="#hand"/></svg></span>
  <span class="b"><svg class="i"><use href="#pans"/></svg></span>
  <span class="b"><svg class="i"><use href="#zin"/></svg></span>
  <span class="b"><svg class="i"><use href="#zout"/></svg></span>
  <span class="b"><svg class="i"><use href="#zful"/></svg></span>
  <span class="b"><svg class="i"><use href="#zsel"/></svg></span>
  <span class="b"><svg class="i"><use href="#zlay"/></svg></span>
  <span class="b off"><svg class="i" viewBox="0 0 24 24"><use href="#z11"/><text x="8.8" y="12" font-size="8" font-weight="700" font-family="Liberation Sans" fill="#666">1:1</text></svg></span>
  <span class="b"><svg class="i"><use href="#zprv"/></svg></span>
  <span class="b off"><svg class="i"><use href="#znxt"/></svg></span>
  <span class="b"><svg class="i"><use href="#nmap"/></svg></span>
  <span class="b"><svg class="i"><use href="#m3d"/></svg></span>
  <span class="b"><svg class="i"><use href="#bmk"/></svg></span>
  <span class="b"><svg class="i"><use href="#bm2"/></svg></span>
  <span class="b"><svg class="i"><use href="#clk"/></svg></span>
  <span class="b"><svg class="i"><use href="#rfr"/></svg></span>
  <i class="h"></i>
  <span class="b"><svg class="i"><use href="#idn"/></svg></span>
  <span class="b"><svg class="i"><use href="#tbl"/></svg></span>
  <span class="b"><svg class="i"><use href="#abc2"/></svg></span>
  <span class="b"><svg class="i"><use href="#gear"/></svg></span>
  <span class="b"><svg class="i"><use href="#sig"/></svg></span>
  <span class="b"><svg class="i"><use href="#rul"/></svg></span><i class="ar"></i>
  <span class="b"><svg class="i"><use href="#nte"/></svg></span>
  <span class="b off"><svg class="i"><use href="#gpl"/></svg></span><i class="ar off"></i>
  <span class="b"><svg class="i" viewBox="0 0 24 24"><use href="#tcl"/><text x="6" y="15" font-size="16" font-weight="700" font-family="Liberation Serif" fill="#444">T</text></svg></span><i class="ar"></i>
</div>

<div class="tb">
  <i class="h h0"></i>
  <span class="b"><svg class="i"><use href="#adl"/></svg></span>
  <span class="b"><svg class="i"><use href="#ngp"/></svg></span>
  <span class="b"><svg class="i"><use href="#vst"/></svg></span>
  <span class="b"><svg class="i"><use href="#fst"/></svg></span>
  <span class="b"><svg class="i"><use href="#chp"/></svg></span>
  <i class="sep"></i>
  <span class="b"><svg class="i"><use href="#vbs"/></svg></span>
  <i class="sep"></i>
  <i class="h h18"></i>
  <span class="b off"><svg class="i"><use href="#pns"/></svg></span>
  <span class="b"><svg class="i"><use href="#pen"/></svg></span>
  <span class="b off"><svg class="i"><use href="#sed"/></svg></span>
  <span class="b off"><svg class="i"><use href="#apl"/></svg></span>
  <span class="b off"><svg class="i"><use href="#vtx"/></svg></span><i class="ar off"></i>
  <span class="b off"><svg class="i"><use href="#ted"/></svg></span>
  <span class="b off"><svg class="i"><use href="#trs"/></svg></span>
  <span class="b off"><svg class="i"><use href="#scs"/></svg></span>
  <span class="b off"><svg class="i"><use href="#cpy"/></svg></span>
  <span class="b off"><svg class="i"><use href="#pst"/></svg></span>
  <span class="b off dim"><svg class="i"><use href="#und"/></svg></span>
  <span class="b off dim"><svg class="i"><use href="#red"/></svg></span>
  <i class="h"></i>
  <span class="b"><svg class="i" viewBox="0 0 24 24"><use href="#yl"/><text x="6.5" y="14" font-size="8" font-weight="700" font-family="Liberation Sans" fill="#222">abc</text></svg></span>
  <span class="b"><svg class="i"><use href="#pie"/></svg></span>
  <i class="sep"></i>
  <span class="b"><svg class="i" viewBox="0 0 24 24"><use href="#apn"/><text x="6" y="10" font-size="8" font-weight="700" font-family="Liberation Sans" fill="#222">ab</text></svg></span>
  <span class="b"><svg class="i" viewBox="0 0 24 24"><use href="#ard"/><text x="6.5" y="12" font-size="8" font-weight="700" font-family="Liberation Sans" fill="#e81c1c">abc</text></svg></span>
  <i class="sep"></i>
  <span class="b off"><svg class="i" viewBox="0 0 24 24"><use href="#a1"/><text x="6" y="10" font-size="8" font-weight="700" font-family="Liberation Sans" fill="#888">ab</text></svg></span>
  <span class="b off"><svg class="i" viewBox="0 0 24 24"><use href="#a2"/><text x="6.5" y="10" font-size="8" font-weight="700" font-family="Liberation Sans" fill="#888">abc</text></svg></span>
  <span class="b off"><svg class="i" viewBox="0 0 24 24"><use href="#a3"/><text x="6.5" y="10" font-size="8" font-weight="700" font-family="Liberation Sans" fill="#888">abc</text></svg></span>
  <span class="b off"><svg class="i" viewBox="0 0 24 24"><use href="#a4"/><text x="6.5" y="10" font-size="8" font-weight="700" font-family="Liberation Sans" fill="#888">abc</text></svg></span>
  <span class="b off"><svg class="i" viewBox="0 0 24 24"><use href="#a5"/><text x="6.5" y="10" font-size="8" font-weight="700" font-family="Liberation Sans" fill="#888">abc</text></svg></span>
  <i class="h h18"></i>
  <span class="b"><svg class="i"><use href="#db"/></svg></span>
  <i class="h"></i>
  <span class="b"><svg class="i"><use href="#hex"/></svg></span>
  <span class="b"><svg class="i"><use href="#gpl2"/></svg></span>
  <span class="b"><svg class="i"><use href="#gms"/></svg></span>
  <span class="b"><svg class="i"><use href="#gbn"/></svg></span>
  <i class="h"></i>
  <span class="b"><svg class="i" viewBox="0 0 24 24"><use href="#hlp"/><text x="10.5" y="17" font-size="13" font-family="Liberation Sans" fill="#e4eef8">?</text></svg></span>
  <i class="h"></i>
  <span class="b"><svg class="i"><use href="#sck"/></svg></span>
  <span class="b"><svg class="i"><use href="#trf"/></svg></span>
</div>

<div class="tb">
  <i class="h h0"></i>
  <span class="b"><svg class="i"><use href="#sel"/></svg></span><i class="ar a12"></i>
  <span class="b"><svg class="i"><use href="#sfm"/></svg></span><i class="ar a12"></i>
  <span class="b"><svg class="i"><use href="#dsl"/></svg></span><i class="ar a12"></i>
  <span class="b"><svg class="i"><use href="#sll"/></svg></span>
  <i class="h"></i>
  <span class="b"><svg class="i"><use href="#lsr"/></svg></span>
  <span class="combo ghana">Ghana</span>
  <span class="search-for">Search for…</span>
  <i class="h"></i>
  <span class="b"><svg class="i"><use href="#gsr"/></svg></span>
  <span class="b"><svg class="i"><use href="#mpn"/></svg></span>
  <i class="h"></i>
  <span class="b"><svg class="i"><use href="#py"/></svg></span>
  <span class="b"><svg class="i"><use href="#fir"/></svg></span>
  <span class="b"><svg class="i"><use href="#fdr"/></svg></span>
  <span class="b"><svg class="i"><use href="#swp"/></svg></span>
  <span class="b"><svg class="i"><use href="#lea"/></svg></span>
  <span class="b"><svg class="i"><use href="#ear"/></svg></span>
  <span class="b"><svg class="i"><use href="#btf"/></svg></span>
  <span class="b"><svg class="i"><use href="#gid"/></svg></span>
  <i class="h"></i><i class="h"></i>
  <span class="b"><svg class="i"><use href="#cht"/></svg></span>
  <i class="h"></i>
  <span class="b"><svg class="i"><use href="#sgn"/></svg></span>
  <i class="h"></i>
  <span class="b off"><svg class="i"><use href="#sh1"/></svg></span><i class="ar a12 off"></i>
  <span class="b off"><svg class="i"><use href="#sh2"/></svg></span>
  <span class="b off"><svg class="i"><use href="#sh3"/></svg></span>
  <span class="b off"><svg class="i"><use href="#sh4"/></svg></span>
  <span class="b off"><svg class="i"><use href="#sh5"/></svg></span>
  <span class="b off"><svg class="i"><use href="#sh6"/></svg></span><i class="ar a12 off"></i>
  <span class="b off"><svg class="i"><use href="#sh7"/></svg></span><i class="ar a12 off"></i>
  <span class="b off"><svg class="i"><use href="#sh8"/></svg></span><i class="ar a12 off"></i>
  <span class="b off"><svg class="i"><use href="#sh9"/></svg></span><i class="ar a12 off"></i>
  <span class="b off"><svg class="i"><use href="#sh9"/></svg></span>
  <span class="more">»</span>
</div>

<main class="main">
  <aside class="lt">
    <i class="vh"></i>
    <span class="lb"><svg class="i"><use href="#v1"/></svg></span>
    <span class="lb"><svg class="i"><use href="#ras"/></svg></span>
    <span class="lb"><svg class="i"><use href="#msh"/></svg></span>
    <span class="lb"><svg class="i"><use href="#cma"/></svg></span>
    <span class="lb"><svg class="i"><use href="#f1"/></svg></span>
    <span class="lb"><svg class="i"><use href="#vb"/></svg></span>
    <span class="lb"><svg class="i"><use href="#pg"/></svg><i class="ar"></i></span>
    <span class="lb"><svg class="i"><use href="#gpl2"/></svg><i class="ar"></i></span>
    <span class="lb"><svg class="i"><use href="#gw"/></svg></span>
    <span class="lb"><svg class="i"><use href="#gv"/></svg><i class="ar"></i></span>
    <span class="lb"><svg class="i"><use href="#ngp"/></svg><i class="ar"></i></span>
  </aside>

  <section class="layers">
    <div class="dock-title"><span>Layers</span><span class="dock-btns"><svg class="db"><use href="#rst"/></svg><svg class="db"><use href="#cls"/></svg></span></div>
    <div class="ptb">
      <span class="pb pressed"><svg class="pi"><use href="#bru"/></svg></span>
      <span class="pb"><svg class="pi"><use href="#grp"/></svg></span>
      <span class="pb"><svg class="pi"><use href="#eye"/></svg></span>
      <span class="pb"><svg class="pi"><use href="#flt"/></svg></span>
      <span class="pb"><svg class="pi" viewBox="0 0 24 24"><use href="#eps"/><text x="1" y="17" font-size="20" font-family="Liberation Serif" fill="#7a4a9a">ε</text></svg></span><i class="ar a13"></i>
      <span class="pb"><svg class="pi"><use href="#xpd"/></svg></span>
      <span class="pb"><svg class="pi"><use href="#cps"/></svg></span>
      <span class="pb"><svg class="pi"><use href="#rmv"/></svg></span>
    </div>
    <div class="tree">
      <div class="row"><i class="tw"></i><i class="cb on"><svg><use href="#chk"/></svg></i><i class="sw s-out"></i><b>lagos_admin_boundary</b></div>
      <div class="row sel"><i class="tw"></i><i class="cb on"><svg><use href="#chk"/></svg></i><i class="sw s-dis"></i><b>Dissolved [2]</b><span class="ind"><svg><use href="#chi"/></svg></span></div>
      <div class="row"><i class="tw"></i><i class="cb on"><svg><use href="#chk"/></svg></i><i class="sw s-vec"></i><b>Vectorized [950]</b><span class="ind"><svg><use href="#chi"/></svg></span></div>
      <div class="row"><i class="tw open"></i><i class="cb on"><svg><use href="#chk"/></svg></i><svg class="ri"><use href="#ras2"/></svg><b>HRSL_DSM</b></div>
      <div class="row leg"><i class="sw c1"></i>0.0000</div>
      <div class="row leg"><i class="sw c2"></i>6.8747</div>
      <div class="row leg"><i class="sw c3"></i>18.3951</div>
      <div class="row leg"><i class="sw c4"></i>117.1621</div>
      <div class="row"><i class="tw open"></i><i class="cb"></i><svg class="ri"><use href="#ras2"/></svg><em class="spaced">&lt;=50</em></div>
      <div class="row leg"><i class="sw k"></i>0</div>
      <div class="row leg"><i class="sw none"></i>1</div>
      <div class="row"><i class="tw open"></i><i class="cb"></i><svg class="ri"><use href="#ras2"/></svg><em>Output</em></div>
      <div class="row leg"><i class="sw c1"></i>-20.0000</div>
      <div class="row leg"><i class="sw c2"></i>7.0000</div>
      <div class="row leg"><i class="sw c3"></i>13.0000</div>
      <div class="row leg"><i class="sw c4"></i>50.0000</div>
      <div class="row"><i class="tw open"></i><i class="cb"></i><svg class="ri"><use href="#ras2"/></svg><em>clipped_reprojected_HRSL_Lagos</em></div>
      <div class="row leg"><i class="sw k"></i>5.48814</div>
      <div class="row leg"><i class="sw none"></i>117.162</div>
      <div class="row"><i class="tw open"></i><i class="cb"></i><svg class="ri"><use href="#ras2"/></svg><em>clipped_reprojected_SRTM_DEM</em></div>
      <div class="row leg"><i class="sw k"></i>-20</div>
      <div class="row leg"><i class="sw none"></i>71</div>
      <div class="row"><i class="tw"></i><i class="cb"></i><svg class="ri"><use href="#ras2"/></svg><em>clipped_reprojected_LandCover_2019</em></div>
      <div class="row"><i class="tw"></i><i class="cb"></i><svg class="ri"><use href="#ras2"/></svg><em>clipped_reprojected_LandCover_2018</em></div>
      <div class="row"><i class="tw"></i><i class="cb"></i><svg class="ri"><use href="#ras2"/></svg><em>clipped_reprojected_LandCover_2017</em></div>
      <div class="row"><i class="tw"></i><i class="cb"></i><svg class="ri"><use href="#ras2"/></svg><em>clipped_reprojected_LandCover_2016</em></div>
      <div class="row"><i class="tw"></i><i class="cb"></i><svg class="ri"><use href="#ras2"/></svg><em>clipped_reprojected_LandCover_2015</em></div>
    </div>
  </section>

  <div class="split"><i class="vh2"></i></div>

  <section class="map">
    <svg class="land" viewBox="-11.4 -573.5 1578 1535">
      <g filter="url(#rough)">
      <path d="M25 270L60 275L100 270L140 285L165 262L190 255L200 220L300 225L400 235L450 225L475 205L470 155L510 130L510 95L535 45L580 70L610 72L640 100L700 102L705 70L715 58L800 65L950 65L1100 68L1285 72L1288 100L1255 125L1265 180L1285 190L1290 235L1270 250L1345 280L1400 295L1520 305L1525 370L1400 355L1200 320L1050 300L900 305L660 312L660 342L500 330L25 350Z" fill="#83b56c"/>
      <path d="M510 120L530 50L580 75L610 75L640 105L700 105L720 100L735 130L720 185L660 240L640 245L560 200Z" fill="#1e1e1e" filter="url(#thin)"/>
      <path d="M650 105L725 100L720 135L665 180Z" fill="#1e1e1e" filter="url(#dense)"/>
      <path d="M530 265L560 225L600 260Z" fill="#1e1e1e" filter="url(#dense)"/>
      <path d="M30 310L180 320L400 315L650 325L655 280L400 265L200 270L30 290Z" fill="#1e1e1e" filter="url(#dense)"/>
      <path d="M200 240L470 235L480 265L200 265ZM660 290L830 240L1000 235L1000 305L660 310Z" fill="#1e1e1e" filter="url(#thin)"/>
      <path d="M720 62L1285 72L1255 125L950 120L820 190L720 170Z" fill="#1e1e1e" filter="url(#thin)"/>
      <path d="M1100 270L1300 300L1520 350L1520 370L1100 310Z" fill="#1e1e1e" filter="url(#thin)"/>
      <path d="M660 178L725 135L720 180L760 210L805 195L820 180L880 170L945 125L1085 128L1125 140L1145 165L1210 175L1245 190L1280 185L1285 200L1240 200L1205 180L1140 170L1120 145L1080 145L1000 150L975 170L965 205L920 210L870 225L820 230L800 265L740 280L650 268L660 240L665 200Z" fill="#fff" stroke="#222" stroke-width="2.5"/>
      <path d="M1115 225L1170 228L1210 250L1270 250L1345 275L1400 300L1435 320L1445 335L1380 315L1330 320L1300 315L1270 295L1210 260L1170 238L1115 238Z" fill="#fff" stroke="#222" stroke-width="2"/>
      <path d="M1280 285L1330 280L1345 300L1310 312L1285 300ZM1355 298L1400 290L1405 312L1370 315Z" fill="#83b56c" stroke="#222" stroke-width="1.5"/>
      <path d="M640 270L655 295L655 330L600 310L650 310" fill="#fff" stroke="#222" stroke-width="1.5"/>
      <path d="M30 315L180 320L400 318L650 325" fill="none" stroke="#1e1e1e" stroke-width="4"/>
      <path d="M180 322L400 323L650 333" fill="none" stroke="#fff" stroke-width="2.5" stroke-dasharray="30 18"/>
      <path d="M30 280L75 285L120 280L150 295" fill="none" stroke="#1e1e1e" stroke-width="7"/>
      <path d="M25 270L60 275L100 270L140 285L165 262L190 255L200 220L300 225L400 235L450 225L475 205L470 155L510 130L510 95L535 45L580 70L610 72L640 100L700 102L705 70L715 58L800 65L950 65L1100 68L1285 72L1288 100L1255 125L1265 180L1285 190L1305 190L1350 155L1390 165L1410 190L1405 210L1345 240L1350 265L1400 285L1405 295L1520 305L1525 370L1400 355L1200 320L1050 300L900 305L660 312L660 342L500 330L25 350Z" fill="none" stroke="#c9981e" stroke-width="2.4"/>
      </g>
    </svg>
  </section>

  <div class="split"><i class="vh2"></i></div>

  <section class="right">
    <div class="dock-title"><span>Layer Styling</span><span class="dock-btns"><svg class="db"><use href="#rst"/></svg><svg class="db"><use href="#cls"/></svg></span></div>
    <div class="combo big"><svg class="plg"><use href="#plg"/></svg>Dissolved</div>
    <div class="sym-row"><svg class="bru"><use href="#bru"/></svg><div class="combo big grow"><svg class="sng"><use href="#sng"/></svg>Single Symbol</div></div>
    <div class="style-body">
      <div class="tabs">
        <svg class="ti" viewBox="0 0 24 24"><use href="#ya"/><text x="6.5" y="15.5" font-size="8" font-weight="700" font-family="Liberation Sans" fill="#333">abc</text></svg>
        <svg class="ti" viewBox="0 0 24 24"><use href="#wa"/><text x="3.5" y="15.5" font-size="10" font-weight="700" font-family="Liberation Sans" fill="#444">abc</text></svg>
        <svg class="ti"><use href="#cub"/></svg>
        <svg class="ti"><use href="#hie"/></svg>
        <svg class="ti"><use href="#hst"/></svg>
      </div>
      <div class="style-main">
        <div class="sym-top">
          <div class="preview"></div>
          <div class="sym-tree">
            <div class="st-row head"><i class="tw open"></i><i class="sw s-dis"></i><b>Fill</b></div>
            <div class="st-row sub"><i class="sw s-fill"></i>Simple Fill</div>
          </div>
          <div class="sym-btns">
            <span class="sb"><svg viewBox="0 0 16 16"><path d="M6 2h4v4h4v4h-4v4H6v-4H2V6h4z" fill="#d8ecd8" stroke="#3f8a4f" stroke-width="1.3"/></svg></span>
            <span class="sb dis"><svg viewBox="0 0 16 16"><path d="M8 3l7 10H1z" fill="#d8d8d6" stroke="#ccc"/></svg></span>
            <span class="sb dis"><svg viewBox="0 0 16 16"><rect x="2" y="6.500" width="12" height="4" fill="#e4dcdc" stroke="#c0bcbc"/></svg></span>
            <span class="sb dis"><svg viewBox="0 0 16 16"><path d="M8 13l7-10H1z" fill="#d8d8d6" stroke="#ccc"/></svg></span>
            <span class="sb dis"><svg viewBox="0 0 16 16"><rect x="2" y="2" width="11" height="12" fill="#e8e8e8" stroke="#bbb"/><rect x="10" y="11" width="4" height="4" fill="#ddd" stroke="#bbb"/></svg></span>
            <span class="sb dis"><svg viewBox="0 0 16 16"><path d="M4 8V5a3.500 3.500 0 0 1 7 0" fill="none" stroke="#ccc" stroke-width="1.5"/><rect x="2" y="8" width="11" height="7" rx="1" fill="#d8d6cc"/></svg></span>
          </div>
        </div>
        <hr class="rule">
        <div class="scroll-wrap">
          <div class="props">
            <div class="prop unit"><label>Unit</label><div class="combo grow">Millimeters</div></div>
            <div class="prop opac"><label>Opacity</label><div class="slider"><i class="knob"></i></div><div class="spin wide">100.0 %</div></div>
            <div class="prop col"><label>Color</label><div class="colorbtn"><i></i></div><i class="colordrop"></i></div>
            <hr class="rule low">
            <div class="fav-row"><div class="fav"><svg class="sicon"><use href="#sr"/></svg><span>Favorites</span><svg class="clr"><use href="#clr"/></svg><i class="favdrop"></i></div><svg class="fav-style" viewBox="0 0 24 24"><use href="#stl"/><text x="14" y="22" font-size="12" font-family="Liberation Sans" fill="#666">a</text></svg></div>
            <div class="list">
              <div class="swatches"><i class="grad"></i><i class="gray"></i></div>
              <div class="vscroll inner"><i class="up"></i><i class="thumb"></i><i class="down"></i></div>
            </div>
          </div>
          <div class="vscroll outer"><i class="up"></i><i class="thumb"></i><i class="down"></i></div>
        </div>
        <div class="rendering"><i class="tri"></i><b>Layer Rendering</b></div>
        <div class="foot">
          <span class="fb"><svg><use href="#und"/></svg></span>
          <span class="fb"><svg><use href="#red"/></svg></span>
          <label class="live"><i class="cb on"><svg><use href="#chk"/></svg></i><span class="live-t">Live update</span></label>
          <span class="apply">Apply</span>
        </div>
      </div>
    </div>
  </section>
</main>

<footer class="status">
  <div class="locator"><svg class="sicon"><use href="#sr"/></svg><span>fix</span><svg class="clr"><use href="#clr"/></svg></div>
  <span class="lbl l-coord">Coordinate</span>
  <span class="field f-coord">149646,191146</span>
  <svg class="st-i"><use href="#wnd"/></svg>
  <span class="lbl l-scale">Scale</span>
  <span class="field f-scale">1:1309394<i class="scdrop"></i></span>
  <svg class="st-l"><use href="#lck"/></svg>
  <span class="lbl l-mag">Magnifier</span>
  <span class="spin f-mag">100%</span>
  <span class="lbl l-rot">Rotation</span>
  <span class="spin f-rot">0.0 °</span>
  <i class="cb on stcb"><svg><use href="#chk"/></svg></i>
  <span class="lbl l-ren">Render</span>
  <svg class="st-c"><use href="#crs"/></svg>
  <span class="lbl l-eps">EPSG:26392</span>
  <svg class="st-m"><use href="#msg"/></svg>
</footer>
</body>
</html>
```
FILE: styles.css
```css
*{box-sizing:border-box}
html,body{margin:0;padding:0}
body{width:1363px;height:726px;overflow:hidden;background:#f0f0f0;font:12px/1 "Open Sans","Noto Sans",sans-serif;letter-spacing:-.3px;color:#000;display:flex;flex-direction:column}
i{font-style:normal;display:block}
.defs{display:block;width:0;height:0}

.title{height:21px;background:#fff;display:flex;align-items:center;flex:none}
.logo{width:16px;height:16px;margin-left:1px}
.title-text{margin-left:3px;letter-spacing:-.35px}
.win{margin-left:auto;display:flex;gap:34px;padding-right:19px}
.wb{width:12px;height:12px}
.wmin{margin-right:-6px}

.menu{height:20px;flex:none;display:flex;align-items:center;gap:13.500px;padding-left:7px;background:#f0f0f0;border-bottom:1px solid #d0d0d0}

.tb{height:39px;flex:none;display:flex;align-items:center;background:linear-gradient(#fcfcfc,#f1f1f1);border-bottom:2px solid #c6c6c6}
.b{width:33px;height:31px;flex:none;display:flex;align-items:center;justify-content:center;border-radius:3px}
.i{width:24px;height:24px;display:block}
.pressed{background:#e2e2e2;border:1px solid #bdbdbd}
.white{background:#fff}
.off{opacity:.4;filter:grayscale(1)}
.dim{opacity:.28}
.h{width:16px;height:22px;flex:none;background:radial-gradient(circle,#a9a9a9 .8px,transparent 1.100px) 0 0/3px 3px;background-clip:content-box;padding:0 5px}
.h0{width:10px;padding:0 2px}
.h18{width:18px;padding:0 6px}
.sep{width:6px;height:26px;flex:none;background:linear-gradient(#d4d4d4,#d4d4d4) center/1px 100% no-repeat}
.ar{width:11px;flex:none;height:6px}
.ar::after{content:"";display:block;margin:0 auto;width:0;height:0;border:4.500px solid transparent;border-top:5px solid #555;border-bottom:0}
.a12{width:12px}
.a13{width:13px}
.more{margin-left:auto;padding-right:4px;font-size:15px;font-weight:700}

.combo{height:22px;background:#fff;border:1px solid #adadad;border-radius:3px;display:flex;align-items:center;padding:1px 0 0 6px;position:relative;flex:none}
.combo::after{content:"";position:absolute;right:6px;top:8px;border:5px solid transparent;border-top:5px solid #555;border-bottom:0}
.ghana{width:85px;height:21px;margin-left:1px;padding-left:4px}
.search-for{width:108px;height:21px;margin-left:3px;background:#fff;border:1px solid #adadad;border-radius:3px;padding:5px 2px 3px;color:#666;flex:none}

.main{flex:1;display:flex;min-height:0}
.lt{width:48px;flex:none;display:flex;flex-direction:column;padding-top:5px}
.vh{height:7px;margin:0 16px;background:radial-gradient(circle,#aaa .8px,transparent 1.100px) 0 0/3px 3px;flex:none}
.lb{height:32px;display:flex;align-items:center;padding-left:4px;gap:4px;flex:none}

.layers{width:402px;flex:none;display:flex;flex-direction:column}
.dock-title{height:22px;display:flex;align-items:center;justify-content:space-between;padding:0 3px 0 5px;flex:none}
.dock-btns{display:flex;gap:2px}
.db{width:12px;height:12px;display:block}
.ptb{display:flex;align-items:center;height:28px;padding:0 0 2px 5px;flex:none}
.pb{width:25px;height:24px;display:flex;align-items:center;justify-content:center;flex:none;border-radius:3px}
.pi{width:20px;height:20px;display:block}
.tree{flex:1;background:#fff;border:1px solid #b5b5b5;border-left-width:2px;padding-top:1px;overflow:hidden;margin-right:2px}
.row{height:18px;display:flex;align-items:center;white-space:nowrap;padding-left:6px;position:relative}
.tw{width:12px;flex:none}
.tw.open::after{content:"";display:block;border:4px solid transparent;border-top:4px solid #555;border-bottom:0;margin-left:1px}
.cb{width:14px;height:14px;border:1px solid #b0b0b0;background:#fff;flex:none;margin-left:5px}
.cb svg{display:block;width:12px;height:12px}
.sw{width:16px;height:16px;flex:none;margin-left:6px;margin-right:6px;border:1px solid transparent}
.ri{width:15px;height:15px;margin-left:7px;margin-right:6px;flex:none;display:block}
.row b{font-size:11.500px;letter-spacing:-.35px;font-weight:700}
.row em{color:#7a7a7a;font-style:italic;font-size:12.500px;letter-spacing:.1px}
.row em.spaced{letter-spacing:1px}
.leg{padding-left:37px}
.s-out{background:#fff;border-color:#ecdca8}
.s-dis{background:#5ba28b;border-color:#4a8a78}
.s-vec{background:#7e8d8c;border-color:#6a7776}
.c1{background:#a9601a}.c2{background:#e6d2a6}.c3{background:#a9dbd1}.c4{background:#008a6e}
.k{background:#000}.none{background:transparent}
.sel{background:#1583dd;color:#fff}
.sel b{text-decoration:underline}
.ind{position:absolute;right:3px;top:1px;width:16px;height:16px;background:#f2f2f2;border:1px solid #ddd;border-radius:2px;display:flex;align-items:center;justify-content:center}
.ind svg{width:13px;height:11px;display:block}

.split{width:5px;flex:none;display:flex;align-items:center;justify-content:center}
.vh2{width:2px;height:16px;background:radial-gradient(circle,#aaa .8px,transparent 1.100px) 0 0/2px 3px}

.map{width:555px;flex:none;background:#fff;border:1px solid #c8c8c8;height:540px;margin-top:1px}
.land{width:553px;height:538px;display:block}

.right{flex:1;min-width:0;display:flex;flex-direction:column;padding-left:3px}
.right .dock-title{padding-left:1px;padding-right:2px}
.big{height:23px;margin-right:3px;padding-left:3px}
.combo .plg{width:20px;height:14px;display:block;margin-right:1px}
.sym-row{display:flex;align-items:center;margin-top:8px;height:22px;flex:none}
.bru{width:20px;height:20px;margin:4px 11px 0 8px;flex:none;display:block}
.grow{flex:1;min-width:0}
.combo .sng{width:14px;height:14px;display:block;margin-right:5px;margin-left:4px}
.style-body{flex:1;display:flex;margin-top:9px;min-height:0;margin-bottom:2px}
.tabs{width:38px;background:#5d5d5d;flex:none;display:flex;flex-direction:column;align-items:center;padding-top:4px;gap:8px}
.ti{width:24px;height:24px;display:block}
.style-main{flex:1;min-width:0;display:flex;flex-direction:column;padding-left:3px}
.sym-top{display:flex;height:136px;margin-top:-2px;flex:none}
.preview{width:61px;height:61px;margin:38px 0 0 20px;background:#83b56c;border:1px solid #232323;flex:none}
.sym-tree{width:127px;height:136px;margin-left:25px;background:#fff;border:1px solid #b5b5b5;flex:none;padding-top:1px}
.st-row{height:18px;display:flex;align-items:center}
.head{background:#f0f0f0;padding-left:6px}
.head .sw{width:16px;height:16px;margin-left:5px;margin-right:6px}
.sub .sw{margin-left:43px;margin-right:6px}
.s-fill{background:#83b56c;border-color:#4d6d40}
.sym-btns{display:grid;grid-template-columns:28px 28px;grid-auto-rows:24px;gap:5px 6px;margin:1px 0 0 6px}
.sb{border:1px solid #b5b5b5;border-radius:3px;background:#f8f8f8;display:flex;align-items:center;justify-content:center}
.sb svg{width:18px;height:18px;display:block}
.sb.dis{border-color:#d4d4d4;background:#f3f3f3}
.rule{border:0;border-top:1px solid #b5b5b5;margin:6px 3px 0 0;height:0;flex:none}
.scroll-wrap{display:flex;height:244px;margin-top:9px;flex:none}
.props{width:278px;flex:none;display:flex;flex-direction:column}
.prop{display:flex;align-items:center;flex:none}
.prop label{width:37px;flex:none;padding-top:1px}
.unit{height:21px}
.opac{height:19px;margin-top:2px}
.col{height:21px;margin-top:2px}
.opac label{width:38px}
.slider{width:134px;height:16px;flex:none;background:linear-gradient(#1583dd,#1583dd) 0 6px/100% 4px no-repeat;display:flex;justify-content:flex-end}
.knob{width:12px;height:12px;background:#fff;border:1px solid #999;border-radius:3px;margin-top:2px}
.spin{height:19px;background:#fff;border:1px solid #adadad;border-radius:3px;display:flex;align-items:center;padding:1px 0 0 5px;position:relative;flex:none}
.spin::after{content:"";position:absolute;right:0;top:0;bottom:0;width:14px;border-left:1px solid #ddd;background:conic-gradient(from 150deg at 50% 20%,#555 0 60deg,transparent 0) 0 3px/100% 5px no-repeat,conic-gradient(from -30deg at 50% 80%,#555 0 60deg,transparent 0) 0 calc(100% - 3px)/100% 5px no-repeat}
.wide{width:100px;margin-left:5px}
.colorbtn{width:229px;height:21px;background:#fff;border:1px solid #adadad;border-radius:3px 0 0 3px;padding:3px 4px;flex:none}
.colorbtn i{height:100%;background:#83b56c;border-radius:2px}
.colordrop{width:12px;height:21px;border:1px solid #adadad;border-left:0;background:#fff;position:relative;border-radius:0 3px 3px 0;flex:none}
.colordrop::after{content:"";position:absolute;left:1px;top:8px;border:4px solid transparent;border-top:4px solid #555;border-bottom:0}
.low{margin:66px 0 0}
.fav-row{display:flex;align-items:center;margin-top:7px;flex:none}
.fav{width:248px;height:22px;background:#fff;border:1px solid #adadad;border-radius:3px;display:flex;align-items:center;padding:0 0 0 10px;position:relative;flex:none}
.sicon{width:14px;height:14px;display:block;flex:none}
.fav span{margin:2px 0 0 5px}
.clr{width:15px;height:11px;display:block;flex:none}
.fav .clr{margin-left:auto;margin-right:26px}
.favdrop{position:absolute;right:0;top:0;bottom:0;width:20px;border-left:1px solid #ccc}
.favdrop::after{content:"";position:absolute;left:5px;top:8px;border:4px solid transparent;border-top:4px solid #555;border-bottom:0}
.fav-style{width:16px;height:16px;margin-left:10px;display:block}
.list{height:78px;margin-top:5px;background:#fff;border:1px solid #b5b5b5;border-bottom:0;display:flex;flex:none;overflow:hidden}
.swatches{flex:1;display:flex;padding:20px 0 0 21px;gap:38px;align-items:flex-start}
.grad{width:64px;height:55px;background:linear-gradient(135deg,#1c0a9a 0,#a32a92 35%,#ee7a52 72%,#fde725 100%);border:2px solid #333;border-radius:2px;flex:none}
.gray{width:62px;height:53px;background:#969696;border:1px solid #b5b5b5;margin-top:1px;flex:none}
.vscroll{width:14px;flex:none;display:flex;flex-direction:column;background:#fff;border-left:1px solid #ddd}
.vscroll .up{height:14px;position:relative;border-bottom:1px solid #ddd}
.vscroll .up::after{content:"";position:absolute;left:2px;top:4px;border:4px solid transparent;border-bottom:4px solid #555;border-top:0}
.vscroll .thumb{height:34px;margin-top:27px;background:#e4e4e4;border:1px solid #ddd}
.vscroll .down{height:14px;margin-top:auto;position:relative}
.outer{width:16px;margin-left:10px;height:243px}
.outer .thumb{margin-top:178px;height:36px;background:#ececec}
.outer .down::after,.vscroll .down::after{content:"";position:absolute;left:3px;top:4px;border:4px solid transparent;border-top:4px solid #555;border-bottom:0}
.rendering{display:flex;align-items:center;height:18px;margin-top:12px;padding-left:5px;flex:none}
.tri{width:0;height:0;border:5px solid transparent;border-left:7px solid #333;border-right:0;margin-right:9px}
.foot{display:flex;align-items:center;height:24px;margin-top:5px;padding-right:3px;flex:none}
.fb{width:24px;height:23px;border:1px solid #c0c0c0;border-radius:3px;display:flex;align-items:center;justify-content:center;margin-right:6px;background:#f6f6f6}
.fb svg{width:17px;height:17px;display:block}
.live{display:flex;align-items:center;gap:4px;margin-left:74px}
.live .cb{margin:0}
.live-t{padding-top:1px}
.apply{width:80px;height:21px;border:1px solid #adadad;border-radius:3px;margin-left:auto;background:#fafafa;display:flex;align-items:center;justify-content:center;padding-top:1px}

.status{height:29px;flex:none;display:flex;align-items:center;padding:2px 0 0 2px;font-size:11px}
.locator{width:198px;height:21px;background:#fff;border:1px solid #adadad;border-radius:3px;display:flex;align-items:center;padding-left:9px;flex:none;font-size:12px}
.locator span{margin-left:6px}
.locator .clr{margin-left:auto;margin-right:7px}
.lbl{flex:none}
.l-coord{margin-left:364px;width:58px}
.l-scale{width:30px}
.l-mag{width:48px}
.l-rot{width:52px}
.l-ren{width:35px}
.l-eps{width:56px}
.field{height:21px;background:#fff;border:1px solid #adadad;border-radius:3px;display:flex;align-items:center;padding-left:5px;flex:none;position:relative}
.f-coord{width:86px}
.st-i{width:16px;height:16px;margin:0 12px 0 8px;display:block;flex:none}
.f-scale{width:79px}
.scdrop{position:absolute;right:0;top:0;bottom:0;width:18px;border-left:1px solid #ddd}
.scdrop::after{content:"";position:absolute;left:5px;top:8px;border:4px solid transparent;border-top:4px solid #555;border-bottom:0}
.st-l{width:12px;height:15px;margin:0 8px 0 13px;display:block;flex:none}
.f-mag{width:87px;height:21px;margin-right:9px}
.f-rot{width:83px;height:21px;margin-right:7px}
.stcb{margin-left:0;margin-right:3px}
.st-c{width:15px;height:15px;margin:0 7px 0 19px;display:block;flex:none}
.st-m{width:18px;height:18px;margin-left:18px;display:block;flex:none}
```
